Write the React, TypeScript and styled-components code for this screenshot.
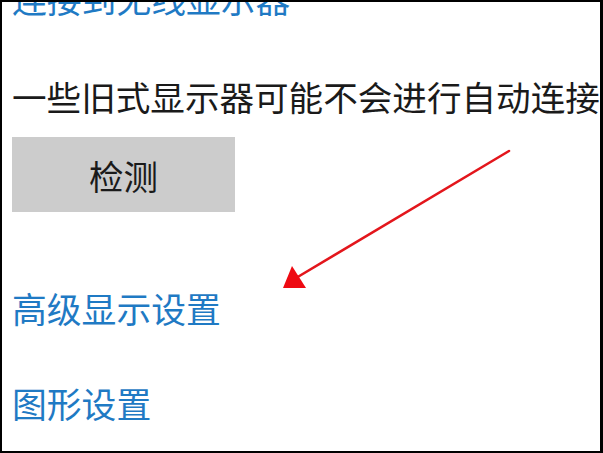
import React from "react";
import styled, { createGlobalStyle } from "styled-components";

const Global = createGlobalStyle`
  html, body { margin: 0; padding: 0; background: #ffffff; }
  body { font-family: "Noto Sans CJK SC", "Noto Sans", sans-serif; }
`;

const Frame = styled.div`
  position: relative;
  box-sizing: border-box;
  width: 603px;
  height: 453px;
  overflow: hidden;
  background: #ffffff;
  border-left: 2px solid #000;
  border-top: 2px solid #000;
  border-right: 3px solid #000;
  border-bottom: 2px solid #000;
`;

const Content = styled.div`
  display: flex;
  flex-direction: column;
  align-items: flex-start;
  padding-left: 10px;
  margin-top: -21px;
`;

const Link = styled.div<{ $gap?: number }>`
  font-size: 34.8px;
  line-height: 34px;
  height: 34px;
  color: #1f7ac4;
  white-space: nowrap;
  margin-top: ${(p) => p.$gap ?? 0}px;
`;

const Description = styled.div`
  font-size: 34.6px;
  line-height: 34px;
  height: 34px;
  color: #1a1a1a;
  white-space: nowrap;
  margin-top: 64px;
`;

const DetectButton = styled.button`
  margin-top: 24px;
  width: 223px;
  height: 75px;
  border: none;
  background: #cccccc;
  color: #1a1a1a;
  font-family: "Noto Sans CJK SC", "Noto Sans", sans-serif;
  font-size: 34.5px;
  display: flex;
  align-items: center;
  justify-content: center;
  padding: 0;
`;

const ArrowLayer = styled.svg`
  position: absolute;
  left: -2px;
  top: -2px;
  pointer-events: none;
`;

export default function App() {
  return (
    <>
      <Global />
      <Frame>
        <Content>
          <Link>连接到无线显示器</Link>
          <Description>一些旧式显示器可能不会进行自动连接</Description>
          <DetectButton>检测</DetectButton>
          <Link $gap={79}>高级显示设置</Link>
          <Link $gap={61}>图形设置</Link>
        </Content>
        <ArrowLayer width="603" height="453" viewBox="0 0 603 453">
          <line x1="509" y1="151" x2="296" y2="278" stroke="#e3161c" strokeWidth="2.6" strokeLinecap="round" />
          <polygon points="283,288 306,288 292,266" fill="#ee0a12" />
        </ArrowLayer>
      </Frame>
    </>
  );
}
